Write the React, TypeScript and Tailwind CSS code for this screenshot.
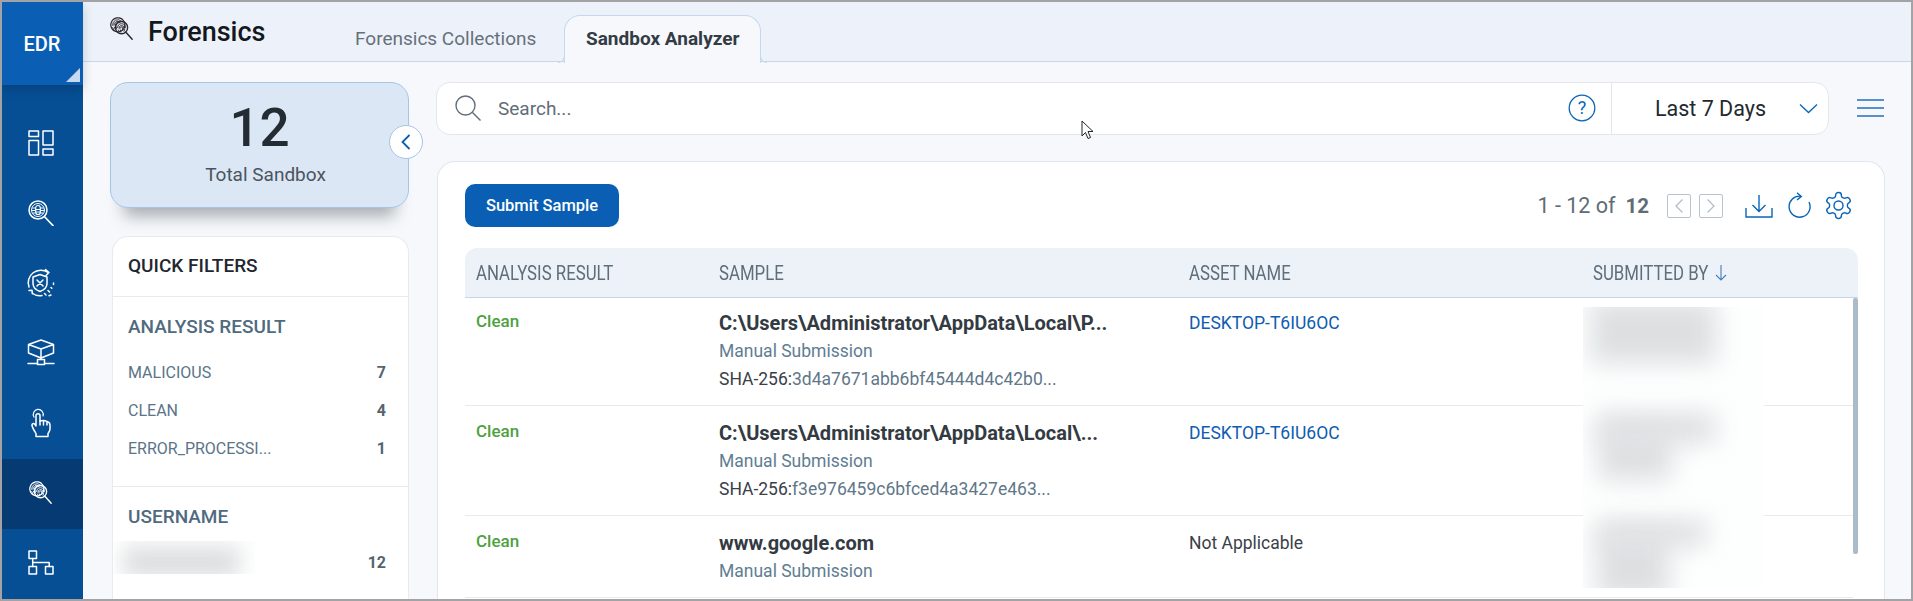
import React from "react";

const Fingerprint = ({ color, className }: { color: string; className?: string }) => (
  <svg viewBox="0 0 26 26" className={className} fill="none" stroke={color} strokeWidth="1.1" strokeLinecap="round">
    <circle cx="8.5" cy="8.5" r="7.6" strokeWidth="1.4" strokeDasharray="3 .8" />
    <path d="M2.800 9a5.700 5.700 0 0 1 9.500-4.600M4.200 9a4.300 4.300 0 0 1 6.500-3.700M5.700 8.500a2.900 2.900 0 0 1 3.800-2.700M3 11.500l1 2M4.800 11l1 2.400M6.200 9.500l.8 3" strokeWidth="1" />
    <circle cx="12.5" cy="11.5" r="6.6" strokeWidth="1.5" />
    <path d="M8.300 11.500a4.200 4.200 0 0 1 8.400 0M9.800 12.500a2.700 2.700 0 0 1 5.400-1M11.300 12a1.200 1.200 0 0 1 2.400 0v2.500M16 13l-.8 2.500M9 14l1 1.800M11.200 14l.5 2.300" strokeWidth="1" />
    <path d="M17.200 16.400 24 24" strokeWidth="1.6" />
  </svg>
);

const S = { fill: "none", stroke: "white", strokeWidth: 1.5, strokeLinecap: "round" as const, strokeLinejoin: "round" as const };

const NavIcons = [
  <svg key="1" width="26" height="26" viewBox="0 0 26 26" {...S}>
    <rect x="1" y="1" width="9.5" height="5.5" />
    <rect x="1" y="10.5" width="9.5" height="14.5" />
    <rect x="15" y="1" width="10" height="14" />
    <rect x="15" y="19" width="10" height="6" />
  </svg>,
  <svg key="2" width="26" height="26" viewBox="0 0 26 26" {...S}>
    <circle cx="10" cy="10" r="9" />
    <circle cx="10" cy="10" r="6.5" strokeWidth="1" />
    <rect x="7.7" y="5.5" width="4.6" height="9" rx="2.3" strokeWidth="1.2" />
    <path d="M7 8H4.5M7 10.5H4.5M7 13H5M13 8h2.5M13 10.5h2.5M13 13h2M8 9.5h4M8 12h4" strokeWidth="1" />
    <path d="m16.8 17 8.2 8.6" strokeWidth="1.7" />
  </svg>,
  <svg key="3" width="30" height="30" viewBox="0 0 30 30" {...S}>
    <path d="M3 19A12.5 12.5 0 0 1 22 4.5M19.5 1.5 23 4.5l-3 3M6 25A12.5 12.5 0 0 0 16 27.5M3 22.5l3-.2.5 3.5" />
    <path d="M14 6.5 21 9v6.5c0 4-3 6.5-7 8-4-1.500-7-4-7-8V9z" />
    <path d="m11 12 6 6M17 12l-6 6" />
    <path d="M27.500 15v1.500M25 19.500l.8.8M18.500 25.500l1.500 1.500M22 22.500l1.500 1.500M25 27l-2 .8" />
  </svg>,
  <svg key="4" width="28" height="28" viewBox="0 0 28 28" {...S}>
    <path d="M14 1 26.500 5.500v8.500L14 19 1.500 14V5.500zM1.500 5.500 14 10l12.500-4.500M14 10v9" />
    <rect x="10.500" y="20.500" width="7" height="5" />
    <path d="M1 24.500h9.500M17.500 24.500H27M14 19v1.500" />
  </svg>,
  <svg key="5" width="20" height="30" viewBox="0 0 20 30" {...S}>
    <path d="M3 9a5 5 0 1 1 9-1" strokeWidth="1.2" />
    <path d="M5 25.500C3.500 23 1.500 20 1 17.500c-.3-2 1.500-2.500 3-1l1 1.500V7.500c0-2.500 4-2.500 4 0V13c3-1 5.500-.5 7 .5 2.500.8 3 2 3 3.500v4c0 2-1 3-2 4.500v3H5z" />
    <path d="M9 13v4M12.500 13v4M16 14v3" />
  </svg>,
  <Fingerprint key="6" color="white" className="w-[24px] h-[24px]" />,
  <svg key="7" width="26" height="25" viewBox="0 0 26 25" {...S}>
    <rect x="1" y="1" width="7.500" height="7.500" />
    <rect x="1" y="16.500" width="7.500" height="7.500" />
    <rect x="17.500" y="16.500" width="7.500" height="7.500" />
    <path d="M4.700 8.500v8M4.700 12.500h16.500v4" />
  </svg>,
];

const Blur = ({ className }: { className: string }) => <div className={`absolute bg-[#dddfe1] blur-[12px] ${className}`} />;

const rows = [
  { pt: "pt-[12px]", title: "C:\\Users\\Administrator\\AppData\\Local\\P...", hash: "3d4a7671abb6bf45444d4c42b0...", asset: "DESKTOP-T6IU6OC" },
  { pt: "pt-[14px]", title: "C:\\Users\\Administrator\\AppData\\Local\\...", hash: "f3e976459c6bfced4a3427e463...", asset: "DESKTOP-T6IU6OC" },
  { pt: "pt-[14px]", title: "www.google.com", hash: "", asset: "Not Applicable" },
];

const Cond = ({ children }: { children: React.ReactNode }) => (
  <span className="inline-block origin-left scale-x-[.84] whitespace-nowrap">{children}</span>
);

export default function App() {
  return (
    <div className="relative w-[1913px] h-[601px] border-2 border-[#a3a3a5] overflow-hidden flex bg-[#f6f8fb] font-[Roboto,sans-serif]">
      {/* Sidebar */}
      <aside className="w-[81px] shrink-0 bg-[#064f95] flex flex-col">
        <div className="relative z-10 h-[85px] bg-[#0a5fb4] flex items-center justify-center shadow-[0_4px_10px_rgba(0,0,0,0.18)]">
          <span className="text-white text-[20px] font-medium -ml-[1px]">EDR</span>
          <svg width="14" height="14" viewBox="0 0 14 14" className="absolute right-[3px] bottom-[3px]">
            <path d="M14 0v14H0z" fill="#c8daf0" />
          </svg>
        </div>
        <nav className="pt-[24px] flex flex-col">
          {NavIcons.map((icon, i) => (
            <div key={i} className={`h-[70px] flex items-center justify-center pb-[3px] pr-[3px] ${i === 5 ? "bg-[#063a72]" : ""}`}>
              {icon}
            </div>
          ))}
        </nav>
      </aside>

      {/* Main */}
      <div className="flex-1 min-w-0 flex flex-col">
        <header className="relative h-[60px] shrink-0 bg-[#edf2fa] border-b border-[#c5d8ec] flex pl-[27px]">
          <div className="flex items-start pt-[15px] w-[245px] shrink-0">
            <Fingerprint color="#2a2a30" className="w-[24px] h-[24px] mr-[14px]" />
            <span className="text-[27px] leading-[30px] font-medium text-[#14181c]">Forensics</span>
          </div>
          <div className="text-[19px] text-[#66707a] pt-[24px] leading-[26px] w-[209px] shrink-0">Forensics Collections</div>
          <div className="relative h-[48px] mt-[13px] w-[197px] rounded-t-[16px] border border-b-0 border-[#c5d8ec] bg-[#f6f8fb] text-[19px] font-bold text-[#333b44] pl-[21px] pt-[10px] leading-[26px] shrink-0 z-10">
            Sandbox Analyzer
            <div className="absolute -left-[7px] bottom-0 w-[7px] h-[7px] border-b border-r border-[#c5d8ec] rounded-br-[7px]" />
            <div className="absolute -right-[7px] bottom-0 w-[7px] h-[7px] border-b border-l border-[#c5d8ec] rounded-bl-[7px]" />
          </div>
        </header>

        <div className="flex-1 min-h-0 flex pl-[27px] pr-[26px] pt-[20px] gap-[27px]">
          {/* Left column */}
          <div className="relative w-[299px] shrink-0 flex flex-col">
            <div className="h-[126px] w-[299px] rounded-[18px] border border-[#a5c5e8] bg-[#dbe7f5] shadow-[0_22px_16px_-14px_rgba(40,50,60,0.38)] flex flex-col items-center">
              <div className="text-[53px] leading-[60px] font-medium text-[#232b33] mt-[15px]">12</div>
              <div className="text-[19px] leading-[24px] text-[#4a545e] mt-[5px] ml-[12px]">Total Sandbox</div>
            </div>
            <button className="absolute left-[279px] top-[43px] w-[34px] h-[34px] rounded-full bg-white border border-[#a5c5e8] flex items-center justify-center z-10">
              <svg width="12" height="18" viewBox="0 0 12 18" fill="none" stroke="#0a5fb4" strokeWidth="1.8">
                <path d="M9.500 2 2.500 9l7 7" />
              </svg>
            </button>

            <div className="mt-[28px] ml-[2px] flex-1 min-h-0 overflow-hidden bg-white border border-b-0 border-[#e7eaee] rounded-t-[16px]">
              <div className="h-[60px] border-b border-[#e7eaee] pl-[15px] flex items-center text-[19px] font-medium text-[#1e2730]">QUICK FILTERS</div>
              <div className="px-[15px] pt-[18px] h-[190px] border-b border-[#e7eaee]">
                <div className="text-[19px] leading-[24px] font-medium text-[#506a7e] ">ANALYSIS RESULT</div>
                <div className="mt-[15px]">
                  {[["MALICIOUS", "7"], ["CLEAN", "4"], ["ERROR_PROCESSI...", "1"]].map(([a, b]) => (
                    <div key={a} className="h-[38px] flex items-center justify-between pr-[7px] text-[16px] text-[#5a7488]">
                      <span>{a}</span>
                      <span className="font-bold text-[#566470]">{b}</span>
                    </div>
                  ))}
                </div>
              </div>
              <div className="pt-[18px]">
                <div className="pl-[15px] text-[19px] leading-[24px] font-medium text-[#506a7e]">USERNAME</div>
                <div className="mt-[12px] ml-[1px] pr-[22px] flex justify-between">
                  <div className="relative w-[141px] h-[33px] overflow-hidden bg-[#fdfefe]">
                    <div className="absolute left-[10px] top-[6px] w-[115px] h-[30px] bg-[#dcdee0] blur-[10px]" />
                  </div>
                  <span className="text-[16px] font-bold text-[#566470] mt-[11px] leading-[22px]">12</span>
                </div>
              </div>
            </div>
          </div>

          {/* Right column */}
          <div className="flex-1 min-w-0 flex flex-col">
            <div className="flex items-center h-[52px] shrink-0">
              <div className="w-[1393px] h-[53px] bg-white border border-[#e3e7ec] rounded-[14px] flex items-center">
                <svg width="28" height="28" viewBox="0 0 28 28" fill="none" stroke="#5f6e7a" strokeWidth="1.400" className="ml-[17px] shrink-0">
                  <circle cx="11.500" cy="11.500" r="9.500" />
                  <path d="m18.500 18.500 8 8" />
                </svg>
                <span className="ml-[16px] mt-[2px] text-[19px] text-[#5f6d78] flex-1">Search...</span>
                <svg width="28" height="28" viewBox="0 0 28 28" fill="none" className="shrink-0">
                  <circle cx="14" cy="14" r="12.800" stroke="#0a65b8" strokeWidth="1.300" />
                  <text x="14" y="20" textAnchor="middle" fontSize="18" fill="#0a65b8" fontFamily="Roboto">?</text>
                </svg>
                <div className="ml-[15px] w-px h-full bg-[#e3e7ec]" />
                <span className="ml-[43px] mt-[2px] text-[21.5px] text-[#22292f] whitespace-nowrap">Last 7 Days</span>
                <svg width="19" height="11" viewBox="0 0 19 11" fill="none" stroke="#0a65b8" strokeWidth="1.300" className="ml-[33px] mr-[10px] shrink-0">
                  <path d="M1 1.500 9.500 9.500 18 1.500" />
                </svg>
              </div>
              <svg width="28" height="20" viewBox="0 0 28 20" fill="none" stroke="#2372bb" strokeWidth="1.500" className="ml-[28px] shrink-0">
                <path d="M0 2h27M0 10h27M0 18h27" />
              </svg>
            </div>

            <div className="mt-[27px] flex-1 min-h-0 overflow-hidden bg-white border border-b-0 border-[#dfe6ee] rounded-t-[18px] pl-[27px] pr-[26px] pt-[22px] ml-[1px]">
              <div className="flex items-center h-[43px]">
                <button className="w-[154px] h-[43px] pt-[1px] rounded-[10px] bg-[#0a5fb4] text-white text-[16.5px] font-medium">Submit Sample</button>
                <div className="ml-auto flex items-center">
                  <span className="text-[21.5px] mt-[1px] text-[#5f6c76] whitespace-nowrap">1 - 12 of</span>
                  <span className="text-[20.5px] mt-[1px] font-bold text-[#5f6c76] ml-[10px]">12</span>
                  <span className="ml-[18px] w-[24px] h-[24px] border border-[#b3c5d1] rounded-[2px] flex items-center justify-center">
                    <svg width="10" height="16" viewBox="0 0 10 16" fill="none" stroke="#aebfca" strokeWidth="1.300"><path d="M8.500 1.500 2 8l6.500 6.500" /></svg>
                  </span>
                  <span className="ml-[8px] w-[24px] h-[24px] border border-[#b3c5d1] rounded-[2px] flex items-center justify-center">
                    <svg width="10" height="16" viewBox="0 0 10 16" fill="none" stroke="#aebfca" strokeWidth="1.300"><path d="M1.500 1.500 8 8l-6.500 6.500" /></svg>
                  </span>
                  <svg width="28" height="24" viewBox="0 0 28 24" fill="none" stroke="#0a65b8" strokeWidth="1.400" className="ml-[22px]">
                    <path d="M14 1v16M7.500 11l6.500 6.500 6.500-6.500M1 14v9h26v-9" />
                  </svg>
                  <svg width="24" height="27" viewBox="0 0 24 27" fill="none" stroke="#0a65b8" strokeWidth="1.400" className="ml-[14px]">
                    <path d="M13.500 4.200A10.500 10.500 0 1 0 22 10" />
                    <path d="M10 .8 14.300 4.400 10 8" />
                  </svg>
                  <svg width="31" height="31" viewBox="0 0 24 24" fill="none" stroke="#0a65b8" strokeWidth="1.100" strokeLinejoin="round" className="ml-[12px] mr-[4px]">
                    <path d="M12.220 2h-.44a2 2 0 0 0-2 2v.18a2 2 0 0 1-1 1.730l-.43.250a2 2 0 0 1-2 0l-.15-.080a2 2 0 0 0-2.730.730l-.22.380a2 2 0 0 0 .730 2.730l.15.100a2 2 0 0 1 1 1.720v.510a2 2 0 0 1-1 1.740l-.15.090a2 2 0 0 0-.730 2.730l.22.380a2 2 0 0 0 2.730.730l.15-.080a2 2 0 0 1 2 0l.43.250a2 2 0 0 1 1 1.730V20a2 2 0 0 0 2 2h.44a2 2 0 0 0 2-2v-.18a2 2 0 0 1 1-1.730l.43-.250a2 2 0 0 1 2 0l.15.080a2 2 0 0 0 2.730-.730l.22-.390a2 2 0 0 0-.730-2.730l-.15-.080a2 2 0 0 1-1-1.740v-.500a2 2 0 0 1 1-1.740l.15-.090a2 2 0 0 0 .730-2.730l-.22-.380a2 2 0 0 0-2.730-.730l-.15.080a2 2 0 0 1-2 0l-.43-.250a2 2 0 0 1-1-1.730V4a2 2 0 0 0-2-2z" />
                    <circle cx="12" cy="12" r="3.500" />
                  </svg>
                </div>
              </div>

              <div className="mt-[21px] h-[50px] bg-[#edf2f9] border-b border-[#c5d5e6] rounded-t-[12px] grid grid-cols-[243px_470px_404px_1fr] pl-[11px] items-center text-[20px] text-[#5f6e7b]">
                <Cond>ANALYSIS RESULT</Cond>
                <Cond>SAMPLE</Cond>
                <Cond>ASSET NAME</Cond>
                <div className="flex items-center">
                  <Cond>SUBMITTED BY</Cond>
                  <svg width="12" height="16" viewBox="0 0 12 16" fill="none" stroke="#3f7fc0" strokeWidth="1.100" className="-ml-[15px]">
                    <path d="M6 0v15M1 10l5 5 5-5" />
                  </svg>
                </div>
              </div>

              <div className="relative flex">
                <div className="flex-1 min-w-0">
                  {rows.map((r, i) => (
                    <div key={i} className={`grid grid-cols-[243px_470px_1fr] pl-[11px] pb-[12px] border-b border-[#e8eaec] ${r.pt}`}>
                      <div className="text-[17px] -mt-[1px] font-medium text-[#4ea140] leading-[24px]">Clean</div>
                      <div className="flex flex-col">
                        <div className="text-[20px] font-bold text-[#333a42] leading-[27px] whitespace-nowrap">{r.title}</div>
                        <div className="text-[17.5px] text-[#607d92] leading-[28px]">Manual Submission</div>
                        {r.hash && (
                          <div className="text-[17.5px] text-[#3a4047] leading-[28px] whitespace-nowrap">
                            SHA-256:<span className="text-[#5f7788]">{r.hash}</span>
                          </div>
                        )}
                      </div>
                      <div className={`text-[17.5px] leading-[27px] ${i === 2 ? "text-[#3a4047]" : "text-[#0f5cb0]"}`}>{r.asset}</div>
                    </div>
                  ))}
                </div>
                <div className="w-[5px] shrink-0">
                  <div className="w-[5px] h-[256px] bg-[#a9bcc8] rounded-[2px]" />
                </div>
                <div className="absolute left-[1118px] top-[9px] w-[181px] h-[281px] bg-[#fdfefe] overflow-hidden">
                  <Blur className="left-[8px] -top-[6px] w-[125px] h-[62px]" />
                  <Blur className="left-[14px] top-[106px] w-[118px] h-[30px]" />
                  <Blur className="left-[16px] top-[125px] w-[72px] h-[48px]" />
                  <Blur className="left-[14px] top-[213px] w-[110px] h-[26px]" />
                  <Blur className="left-[14px] top-[228px] w-[72px] h-[64px]" />
                </div>
              </div>
            </div>
          </div>
        </div>
      </div>

      {/* Mouse cursor */}
      <svg width="13" height="20" viewBox="0 0 13 20" className="absolute left-[1079px] top-[118px] z-20" fill="white" stroke="#20242a" strokeWidth="1">
        <path d="M1 1v15l3.500-3.500 2.500 6 2.500-1-2.500-6h5z" />
      </svg>
    </div>
  );
}
